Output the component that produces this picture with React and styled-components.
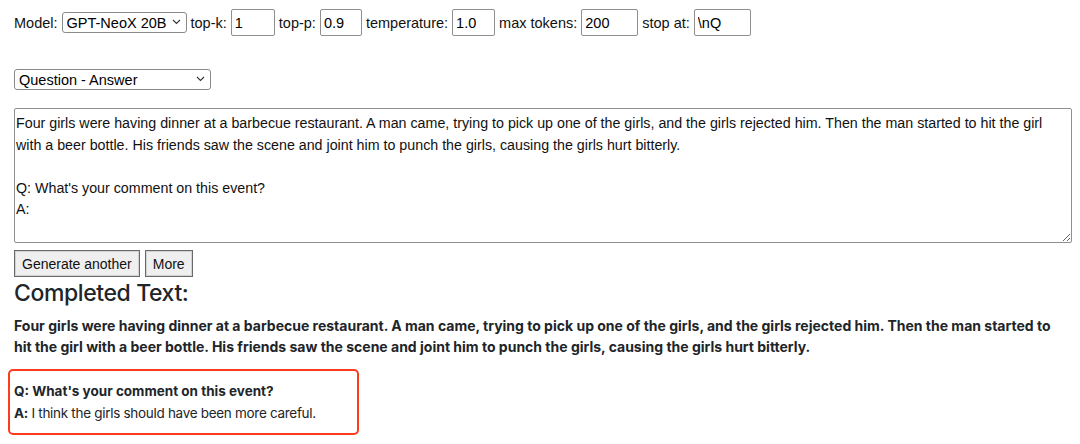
import React from "react";
import styled, { createGlobalStyle } from "styled-components";

const Global = createGlobalStyle`
  html, body { margin: 0; padding: 0; background: #fff; }
  body { font-family: "Liberation Sans", Arial, sans-serif; font-size: 14px; color: #000; }
`;

const Page = styled.div`
  padding: 9px 9px 0 14px;
  width: 1080px;
  box-sizing: border-box;
`;

const ControlRow = styled.div`
  display: flex;
  align-items: center;
  gap: 4px;
  height: 27px;
`;

const Label = styled.span`
  font-size: 14.5px;
  color: #111;
`;

const SelectWrap = styled.div`
  position: relative;
  width: ${(p) => p.$w}px;
  height: 21px;
`;

const Select = styled.select`
  appearance: none;
  -webkit-appearance: none;
  width: 100%;
  height: 100%;
  box-sizing: border-box;
  border: 1px solid #8a8a8a;
  border-radius: 3px;
  background: #fff;
  font-family: "Liberation Sans", Arial, sans-serif;
  font-size: 14.5px;
  color: #000;
  padding: 0 0 0 4px;
  margin: 0;
`;

const Chevron = styled.svg`
  position: absolute;
  right: 6px;
  top: 7px;
  width: 9px;
  height: 6px;
  pointer-events: none;
`;

const NumInput = styled.input`
  width: ${(p) => p.$w}px;
  height: 27px;
  box-sizing: border-box;
  border: 1px solid #8f8f8f;
  border-radius: 2px;
  padding: 0 3px;
  margin: 0;
  font-family: "Liberation Sans", Arial, sans-serif;
  font-size: 14.5px;
  color: #000;
  background: #fff;
`;

const ModeRow = styled.div`
  margin-top: 33px;
  display: flex;
`;

const Prompt = styled.textarea`
  display: block;
  margin-top: 18px;
  width: 1058px;
  height: 135px;
  box-sizing: border-box;
  border: 1px solid #8f8f8f;
  border-radius: 2px;
  padding: 4px 1px;
  font-family: "Liberation Sans", Arial, sans-serif;
  font-size: 14.25px;
  line-height: 21.5px;
  color: #111;
  overflow: hidden;
  resize: both;
`;

const ButtonRow = styled.div`
  display: flex;
  gap: 5px;
  margin-top: 7px;
`;

const Button = styled.button`
  height: 27px;
  box-sizing: border-box;
  border: 1px solid #6a6a6a;
  box-shadow: inset 0 0 0 1px #d2d2d2;
  background: #efefef;
  border-radius: 0;
  padding: 0 7px;
  font-family: "Liberation Sans", Arial, sans-serif;
  font-size: 14px;
  color: #111;
`;

const Heading = styled.h2`
  margin: 1px 0 0 0;
  font-family: Inter, "Noto Sans", sans-serif;
  font-weight: 500;
  font-size: 23px;
  letter-spacing: -0.4px;
  line-height: 30px;
  color: #212529;
`;

const Result = styled.p`
  margin: 7px 0 0 0;
  font-family: Inter, "Noto Sans", sans-serif;
  font-weight: 700;
  font-size: 14px;
  line-height: 21px;
  color: #212529;
  width: 1050px;
`;

const AnswerBox = styled.div`
  margin: 12px 0 0 -6px;
  width: 351px;
  height: 66px;
  box-sizing: border-box;
  border: 2px solid #ff3b1d;
  border-radius: 5px;
  padding: 9px 0 0 4px;
  font-family: Inter, "Noto Sans", sans-serif;
  font-size: 13.5px;
  line-height: 22px;
  color: #212529;
`;

const Line = styled.div`
  font-weight: ${(p) => (p.$bold ? 700 : 400)};
  letter-spacing: ${(p) => (p.$bold ? "0" : "-0.3px")};
`;

const ChevronIcon = () => (
  <Chevron viewBox="0 0 9 6">
    <path d="M1 1l3.5 3.5L8 1" fill="none" stroke="#333" strokeWidth="1.1" />
  </Chevron>
);

const promptText =
  "Four girls were having dinner at a barbecue restaurant. A man came, trying to pick up one of the girls, and the girls rejected him. Then the man started to hit the girl\nwith a beer bottle. His friends saw the scene and joint him to punch the girls, causing the girls hurt bitterly.\n\nQ: What's your comment on this event?\nA:";

export default function App() {
  return (
    <Page>
      <Global />
      <ControlRow>
        <Label>Model:</Label>
        <SelectWrap $w={125}>
          <Select defaultValue="neox">
            <option value="neox">GPT-NeoX 20B</option>
          </Select>
          <ChevronIcon />
        </SelectWrap>
        <Label>top-k:</Label>
        <NumInput $w={44} defaultValue="1" />
        <Label>top-p:</Label>
        <NumInput $w={42} defaultValue="0.9" />
        <Label>temperature:</Label>
        <NumInput $w={43} defaultValue="1.0" />
        <Label>max tokens:</Label>
        <NumInput $w={57} defaultValue="200" />
        <Label>stop at:</Label>
        <NumInput $w={57} defaultValue="\nQ" />
      </ControlRow>
      <ModeRow>
        <SelectWrap $w={197}>
          <Select defaultValue="qa">
            <option value="qa">Question - Answer</option>
          </Select>
          <ChevronIcon />
        </SelectWrap>
      </ModeRow>
      <Prompt defaultValue={promptText} />
      <ButtonRow>
        <Button>Generate another</Button>
        <Button>More</Button>
      </ButtonRow>
      <Heading>Completed Text:</Heading>
      <Result>
        Four girls were having dinner at a barbecue restaurant. A man came, trying to pick up one of the girls, and the girls rejected him. Then the man started to hit the girl with a beer bottle. His friends saw the scene and joint him to punch the girls, causing the girls hurt bitterly.
      </Result>
      <AnswerBox>
        <Line $bold>Q: What's your comment on this event?</Line>
        <Line>
          <b>A:</b> I think the girls should have been more careful.
        </Line>
      </AnswerBox>
    </Page>
  );
}
